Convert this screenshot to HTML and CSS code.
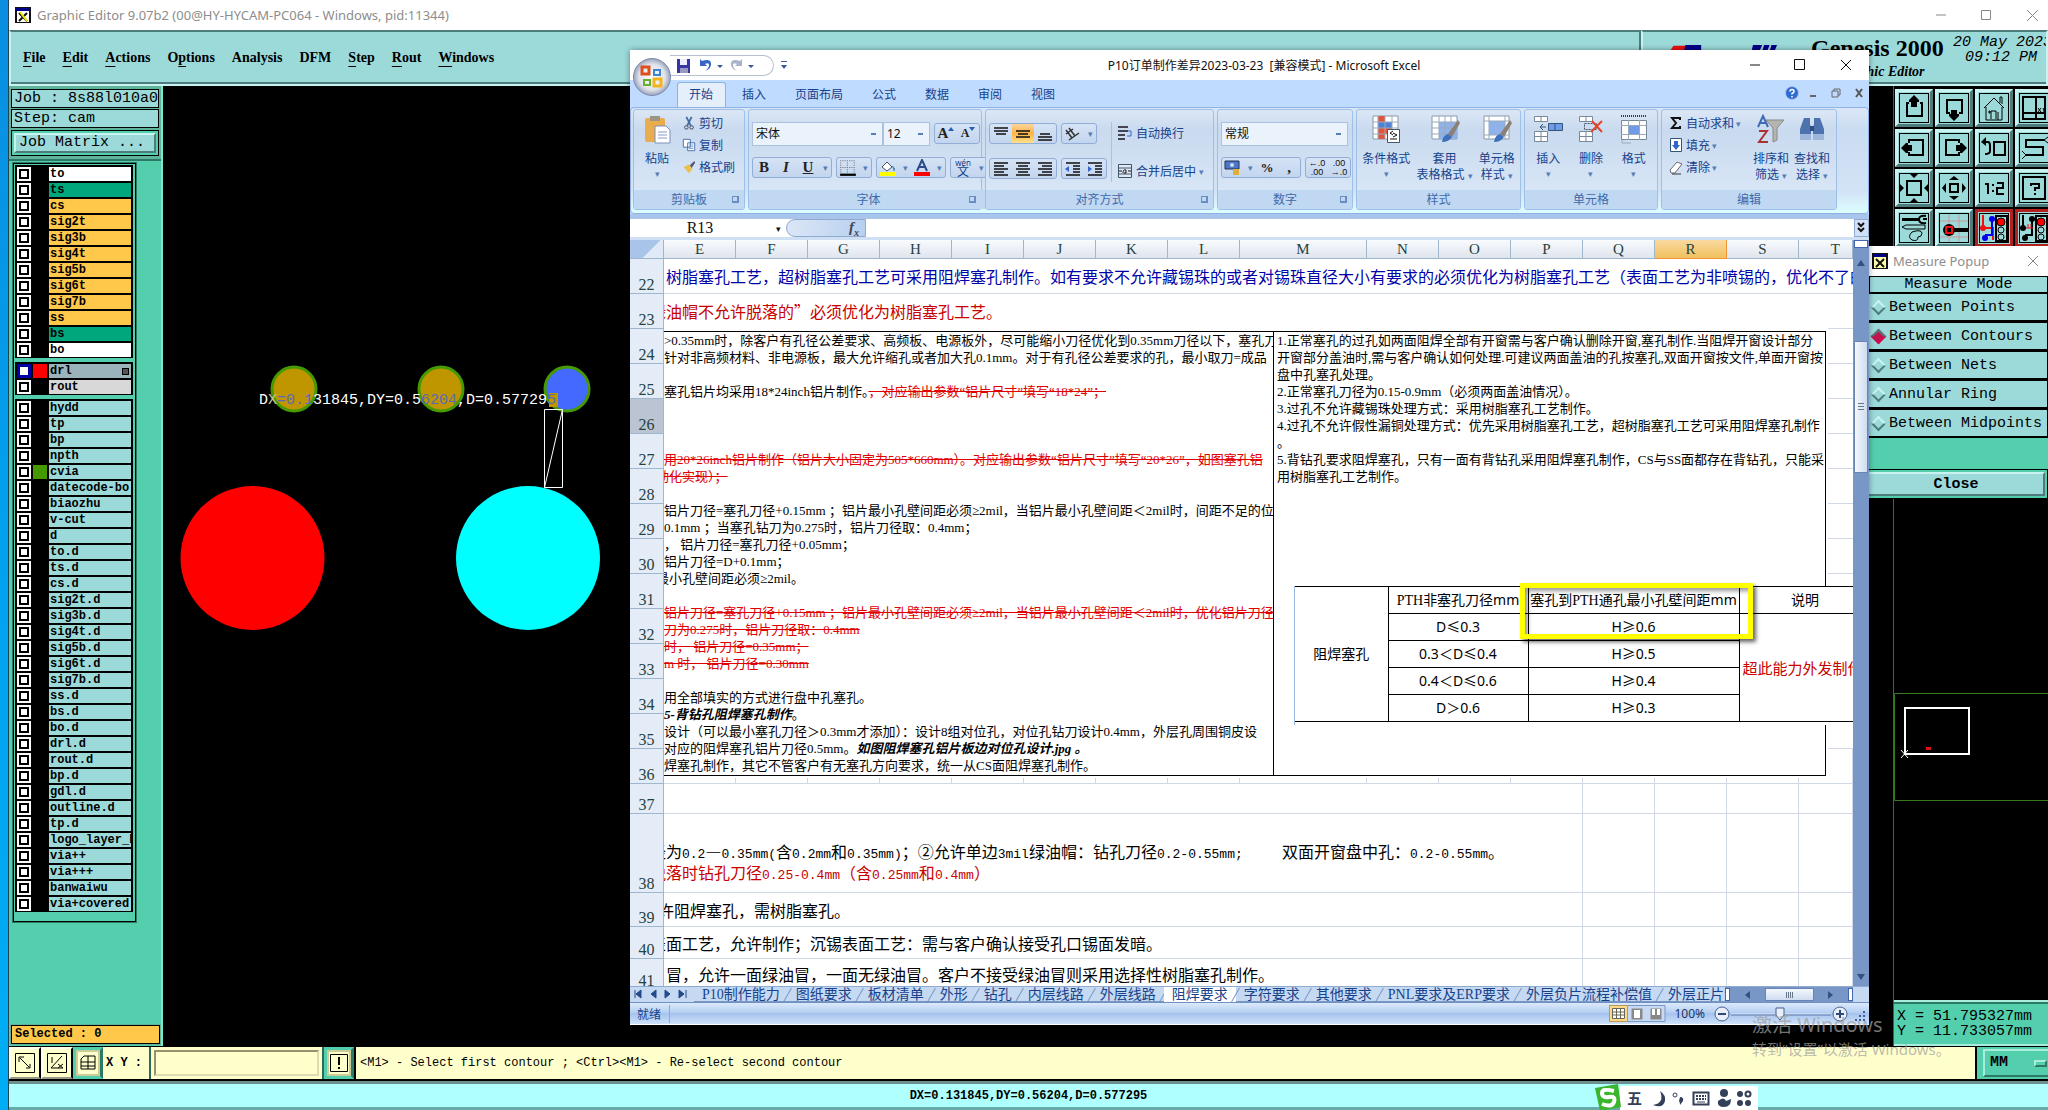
FILE: index.html
```html
<!DOCTYPE html>
<html lang="zh-CN">
<head>
<meta charset="utf-8">
<title>Graphic Editor</title>
<link rel="stylesheet" href="styles.css">
</head>
<body>
<div class="desktop">
<div class="wallpaper"></div>
<div class="editor">
  <header class="caption">
    <svg class="xicon" viewBox="0 0 16 16"><rect x="0" y="0" width="16" height="16" fill="#111"/><rect x="1" y="1" width="13" height="3" fill="#008"/><rect x="2" y="4" width="12" height="11" fill="#fff"/><path d="M4 6l8 8M12 6l-8 8" stroke="#111" stroke-width="2"/><path d="M5 5l7 9" stroke="#ee0" stroke-width="2"/></svg>
    <h1>Graphic Editor 9.07b2 (00@HY-HYCAM-PC064 - Windows, pid:11344)</h1>
    <svg class="winctl" viewBox="0 0 120 16"><path d="M8 8h10M53.500 3.500h9v9h-9zM99 3l11 11M110 3l-11 11" fill="none" stroke="#888"/></svg>
  </header>
  <div class="topbar">
    <nav class="menu">
      <a href="#"><u>F</u>ile</a><a href="#"><u>E</u>dit</a><a href="#"><u>A</u>ctions</a><a href="#">O<u>p</u>tions</a><a href="#">Analysis</a><a href="#">DFM</a><a href="#"><u>S</u>tep</a><a href="#"><u>R</u>out</a><a href="#"><u>W</u>indows</a>
    </nav>
    <div class="brand">
      <svg viewBox="0 0 130 40" class="brand-mark"><path d="M6 2h14l-2 9H0zM0 8h9l-3 8H0z" fill="#e11"/><path d="M19 1h17v8H17zM92 1l10 0-4 9h-8zM104 1h6l-4 10h-5zM112 1h6l-4 10h-5z" fill="#008"/></svg>
      <div class="brand-name"><b>Genesis 2000</b><i>Graphic Editor</i></div>
      <div class="clock"><span>20 May 2023</span><span>09:12 PM</span></div>
    </div>
  </div>
  <main class="work">
    <aside class="left">
      <div class="job">
        <div class="field">Job : 8s88l010a0</div>
        <div class="field">Step: cam</div>
        <div class="matrix"><button>Job Matrix ...</button></div>
      </div>
      <div class="layers">
        <div class="group">
          <label class="white"><input type="checkbox"><i></i><span>to</span></label>
          <label class="green"><input type="checkbox"><i></i><span>ts</span></label>
          <label class="gold"><input type="checkbox"><i></i><span>cs</span></label>
          <label class="gold"><input type="checkbox"><i></i><span>sig2t</span></label>
          <label class="gold"><input type="checkbox"><i></i><span>sig3b</span></label>
          <label class="gold"><input type="checkbox"><i></i><span>sig4t</span></label>
          <label class="gold"><input type="checkbox"><i></i><span>sig5b</span></label>
          <label class="gold"><input type="checkbox"><i></i><span>sig6t</span></label>
          <label class="gold"><input type="checkbox"><i></i><span>sig7b</span></label>
          <label class="gold"><input type="checkbox"><i></i><span>ss</span></label>
          <label class="green"><input type="checkbox"><i></i><span>bs</span></label>
          <label class="white"><input type="checkbox"><i></i><span>bo</span></label>
        </div>
        <div class="group">
          <label class="steel"><input type="checkbox" checked><i class="red"></i><span>drl</span></label>
          <label class="grey"><input type="checkbox"><i></i><span>rout</span></label>
        </div>
        <div class="group">
          <label><input type="checkbox"><i></i><span>hydd</span></label>
          <label><input type="checkbox"><i></i><span>tp</span></label>
          <label><input type="checkbox"><i></i><span>bp</span></label>
          <label><input type="checkbox"><i></i><span>npth</span></label>
          <label><input type="checkbox"><i class="moss"></i><span>cvia</span></label>
          <label><input type="checkbox"><i></i><span>datecode-bo</span></label>
          <label><input type="checkbox"><i></i><span>biaozhu</span></label>
          <label><input type="checkbox"><i></i><span>v-cut</span></label>
          <label><input type="checkbox"><i></i><span>d</span></label>
          <label><input type="checkbox"><i></i><span>to.d</span></label>
          <label><input type="checkbox"><i></i><span>ts.d</span></label>
          <label><input type="checkbox"><i></i><span>cs.d</span></label>
          <label><input type="checkbox"><i></i><span>sig2t.d</span></label>
          <label><input type="checkbox"><i></i><span>sig3b.d</span></label>
          <label><input type="checkbox"><i></i><span>sig4t.d</span></label>
          <label><input type="checkbox"><i></i><span>sig5b.d</span></label>
          <label><input type="checkbox"><i></i><span>sig6t.d</span></label>
          <label><input type="checkbox"><i></i><span>sig7b.d</span></label>
          <label><input type="checkbox"><i></i><span>ss.d</span></label>
          <label><input type="checkbox"><i></i><span>bs.d</span></label>
          <label><input type="checkbox"><i></i><span>bo.d</span></label>
          <label><input type="checkbox"><i></i><span>drl.d</span></label>
          <label><input type="checkbox"><i></i><span>rout.d</span></label>
          <label><input type="checkbox"><i></i><span>bp.d</span></label>
          <label><input type="checkbox"><i></i><span>gdl.d</span></label>
          <label><input type="checkbox"><i></i><span>outline.d</span></label>
          <label><input type="checkbox"><i></i><span>tp.d</span></label>
          <label><input type="checkbox"><i></i><span>logo_layer_b</span></label>
          <label><input type="checkbox"><i></i><span>via++</span></label>
          <label><input type="checkbox"><i></i><span>via+++</span></label>
          <label><input type="checkbox"><i></i><span>banwaiwu</span></label>
          <label><input type="checkbox"><i></i><span>via+covered</span></label>
        </div>
      </div>
      <div class="selected">Selected : 0</div>
    </aside>
    <svg class="canvas">
      <g stroke="#459a00" stroke-width="3"><circle cx="131" cy="303" r="22" fill="#bf9600"/><circle cx="278" cy="303" r="22" fill="#bf9600"/><circle cx="404" cy="303" r="22" fill="#4369ff"/></g>
      <circle cx="89.500" cy="472" r="72" fill="#f00"/><circle cx="365" cy="472" r="72" fill="#0ff"/>
      <path d="M381.500 323.500h18v78h-18zM381.500 401.500l18-78" fill="none" stroke="#fff"/>
      <rect x="386" y="307" width="9" height="14" fill="#bf9600"/>
      <text x="96" y="318" fill="#fff">D<tspan fill="#c4c4a0">X</tspan><tspan fill="#5a6ab8">=0.1</tspan>31845,DY=0.5<tspan fill="#5a6ab8">6204</tspan>,D=0.57729<tspan fill="#5a6ab8">5</tspan></text>
    </svg>
    <aside class="right">
      <div class="tools">
        <button aria-label="Pan up"><svg viewBox="0 0 30 30"><path d="M10 10H8v13h15V10h-2" fill="none" stroke="#000" stroke-width="2"/><path d="M15 2l5 5v2h-2v5h-6V9h-2V7z"/></svg></button>
        <button aria-label="Pan down"><svg viewBox="0 0 30 30"><path d="M11 20H8V7h15v13h-3" fill="none" stroke="#000" stroke-width="2"/><path d="M12 17h6v4h2v2l-5 5-5-5v-2h2z"/></svg></button>
        <button aria-label="Home"><svg viewBox="0 0 30 30"><path d="M5 15L15 5l10 10M7 14v13h16V14M21 10V4h2v7M12 26v-8h5v8M19 19v8M10 18h1v2h-1z" fill="none" stroke="#000"/></svg></button>
        <button aria-label="Zoom XY"><svg viewBox="0 0 30 30"><path d="M4 4h22v22H4zM17 4v22M4 20h22" fill="none" stroke="#000" stroke-width="2"/><path d="M19 15l3 4m0-4l-3 4M24 15l1 2v2" stroke="#000"/></svg></button>
        <button aria-label="Pan left"><svg viewBox="0 0 30 30"><path d="M10 10V7h14v15H10v-3" fill="none" stroke="#000" stroke-width="2"/><path d="M2 15l5-5h2v2h4v6H9v2H7z"/></svg></button>
        <button aria-label="Pan right"><svg viewBox="0 0 30 30"><path d="M20 10V7H7v15h13v-3" fill="none" stroke="#000" stroke-width="2"/><path d="M28 15l-5-5h-2v2h-4v6h4v2h2z"/></svg></button>
        <button aria-label="Previous view"><svg viewBox="0 0 30 30"><path d="M15 9h11v13H15zM5 9h4q2 0 2 4v5q0 3-5 3" fill="none" stroke="#000" stroke-width="2"/><path d="M2 9l5-5v9z"/></svg></button>
        <button aria-label="Serpentine"><svg viewBox="0 0 30 30"><path d="M25 7H7v7h17v8H7" fill="none" stroke="#000" stroke-width="2"/><path d="M25 7l4-3m-4 3l4 3M7 22l-4-4m4 4l-4 4" stroke="#000"/></svg></button>
        <button aria-label="Zoom in"><svg viewBox="0 0 30 30"><path d="M8 8h14v14H8z" fill="none" stroke="#000" stroke-width="2"/><path d="M10 0h10l-5 5zM10 30h10l-5-5zM0 10v10l5-5zM30 10v10l-5-5z"/></svg></button>
        <button aria-label="Zoom out"><svg viewBox="0 0 30 30"><path d="M11 11h8v8h-8z" fill="none" stroke="#000" stroke-width="2"/><path d="M10 7h10l-5-4zM10 23h10l-5 4zM7 10v10l-4-5zM23 10v10l4-5z"/></svg></button>
        <button aria-label="Scale 1:2"><svg viewBox="0 0 30 30"><path d="M6 11h3v10M13 12h2M13 18h2M18 10h6v5h-6v6h7" fill="none" stroke="#000" stroke-width="2"/></svg></button>
        <button aria-label="Help"><svg viewBox="0 0 30 30"><path d="M4 4h22v22H4zM12 13v-2h8v4h-4v3M16 20v2" fill="none" stroke="#000" stroke-width="2"/></svg></button>
        <button aria-label="Setup"><svg viewBox="0 0 30 30"><path d="M3 5h17v3H3z"/><path d="M27 3q-7-1-7 3.500t7 3.500M24 6h4" fill="none" stroke="#000" stroke-width="2"/><path d="M3 14l4-2h19v4H7zM13 19q9-3 10 1 0 4-4 4 0 5-6 3-5-3 0-8z" fill="none" stroke="#000"/></svg></button>
        <button aria-label="Probe"><svg viewBox="0 0 30 30"><path d="M10 0v30M20 0v30M0 8h30M0 24h30" stroke="#c99"/><circle cx="10" cy="17" r="6"/><path d="M15 15h14v4H15z"/><path d="M7 14h6v6H7z" fill="none" stroke="#e11" stroke-width="2"/></svg></button>
        <button class="hot" aria-label="Nets"><svg viewBox="0 0 30 30"><path d="M4 2v13h10v12" stroke="#e11" fill="none" stroke-width="2"/><path d="M13 6v16H6" stroke="#00e" fill="none" stroke-width="2"/><circle cx="4" cy="15" r="3" fill="#e11"/><circle cx="13" cy="6" r="3" fill="#00e"/><circle cx="6" cy="25" r="3" fill="#00e"/><rect x="17" y="3" width="11" height="25" fill="#9cdada" stroke="#000" stroke-width="2"/><circle cx="22" cy="9" r="4" fill="#f00" stroke="#000"/><circle cx="22" cy="17" r="3" fill="none" stroke="#000"/><circle cx="22" cy="24" r="3" fill="none" stroke="#000"/></svg></button>
        <button class="hot" aria-label="Check"><svg viewBox="0 0 30 30"><path d="M4 2v13M13 6v16H6" stroke="#000" fill="none" stroke-width="2"/><path d="M7 15h7M9 11v4M12 11v4" stroke="#e11"/><circle cx="4" cy="15" r="3"/><circle cx="13" cy="6" r="3"/><circle cx="6" cy="25" r="3"/><rect x="17" y="3" width="11" height="25" fill="#9cdada" stroke="#000" stroke-width="2"/><circle cx="22" cy="9" r="4" fill="#f00" stroke="#000"/><circle cx="22" cy="17" r="3" fill="none" stroke="#000"/><circle cx="22" cy="24" r="3" fill="none" stroke="#000"/></svg></button>
      </div>
      <div class="overview">
        <svg viewBox="0 0 155 108"><path d="M.5.500H156v107H.5z" fill="none" stroke="#3a7a1e"/><path d="M11 15h64v46H11z" fill="none" stroke="#fff" stroke-width="2"/><path d="M7 57l7 8m0-8l-7 8" stroke="#fff"/><path d="M32 54h5v3h-5z" fill="#d11"/></svg>
      </div>
      <div class="coords"><span>X = 51.795327mm</span><span>Y = 11.733057mm</span></div>
    </aside>
  </main>
  <footer class="command">
    <button class="flat" aria-label="Stretch"><svg viewBox="0 0 20 20"><path d="M.5.500h19v19H.5zM4 9V4h5M5 5l9 9M15 11v4h-4" fill="none" stroke="#000"/></svg></button>
    <button class="flat" aria-label="Angle"><svg viewBox="0 0 20 20"><path d="M.5.500h19v19H.5zM15 3L4 15h12M5 4v6M11 11l5 4m0-4l-5 4" fill="none" stroke="#000"/></svg></button>
    <button class="on" aria-label="Grid"><svg viewBox="0 0 20 20"><path d="M6 3h11v13H3V6zM3 9h14M10 3v13M3 13h14" fill="none" stroke="#000"/></svg></button>
    <label for="xy">X Y :</label>
    <span class="xybox"><input id="xy" type="text"></span>
    <button class="on" aria-label="Apply"><svg viewBox="0 0 20 20"><path d="M1.500 1.500h17v17h-17z" fill="none" stroke="#000"/><path d="M10 4v8M10 14v2" stroke="#000" stroke-width="2"/></svg></button>
    <p>&lt;M1&gt; - Select first contour ; &lt;Ctrl&gt;&lt;M1&gt; - Re-select second contour</p>
    <div class="units"><button>MM<i></i></button></div>
  </footer>
  <div class="status">DX=0.131845,DY=0.56204,D=0.577295</div>
</div>
</div>

<section class="popup">
  <header>
    <svg class="xicon" viewBox="0 0 16 16"><rect width="16" height="16" fill="#111"/><rect x="1" y="1" width="13" height="3" fill="#008"/><rect x="2" y="4" width="12" height="11" fill="#ffa"/><path d="M4 6l8 8M12 6l-8 8" stroke="#111" stroke-width="2"/></svg>
    <h2>Measure Popup</h2>
    <svg class="px" viewBox="0 0 12 12"><path d="M1 1l10 10M11 1L1 11" stroke="#888"/></svg>
  </header>
  <fieldset>
    <legend>Measure Mode</legend>
    <label><input type="radio" name="mode">Between Points</label>
    <label><input type="radio" name="mode" checked>Between Contours</label>
    <label><input type="radio" name="mode">Between Nets</label>
    <label><input type="radio" name="mode">Annular Ring</label>
    <label><input type="radio" name="mode">Between Midpoints</label>
  </fieldset>
  <div class="close"><button>Close</button></div>
</section>

<section class="excel">
  <header class="xl-title">
    <div class="qat">
      <svg viewBox="0 0 110 20"><path d="M7 3h13v14H7z" fill="#3535a5"/><path d="M10 3h7v6h-7z" fill="#eef"/><path d="M10 12h8v5h-8z" fill="#99b"/><path d="M30 3v7h7l-2-2q4-2 4 1t-4 6q7-3 6-8t-9-2z" fill="#3767c4"/><path d="M47 9h6l-3 3zM78 9h6l-3 3z" fill="#3b5a95"/><path d="M72 3v7h-7l2-2q-4-2-4 1t4 6q-7-3-6-8t9-2z" fill="#a9b4c8"/></svg>
    </div>
    <svg class="more" viewBox="0 0 8 10"><path d="M1 5h6l-3 4zM1 1h6v1H1z" fill="#3b5a95"/></svg>
    <h2>P10订单制作差异2023-03-23&nbsp; [兼容模式] - Microsoft Excel</h2>
    <svg class="winctl" viewBox="0 0 120 16"><path d="M10 8h10M54.500 2.500h10v10h-10zM101 3l10 10M111 3l-10 10" fill="none" stroke="#111"/></svg>
  </header>
  <svg class="orb" viewBox="0 0 40 40"><defs><radialGradient id="o"><stop offset="0" stop-color="#fff"/><stop offset=".7" stop-color="#dfe2ea"/><stop offset="1" stop-color="#98a2ba"/></radialGradient></defs><circle cx="20" cy="20" r="18.500" fill="url(#o)" stroke="#7d8db0"/><g fill="none" stroke-width="3"><path d="M10 10h7v7h-7z" stroke="#dd4f1c"/><path d="M22 13h6v5h-6z" stroke="#3a86d4" stroke-width="2"/><path d="M12 23h6v5h-6z" stroke="#6bad2c" stroke-width="2"/><path d="M22 22h7v7h-7z" stroke="#f2b51d"/></g></svg>
  <nav class="xl-tabs">
    <a href="#" class="active">开始</a><a href="#">插入</a><a href="#">页面布局</a><a href="#">公式</a><a href="#">数据</a><a href="#">审阅</a><a href="#">视图</a>
    <svg viewBox="0 0 90 16"><circle cx="8" cy="8" r="6.500" fill="#2f6bd0" stroke="#a9c4ee"/><path d="M6 6.500q0-2 2-2t2 2q0 1-2 2v1M8 11v1.500" stroke="#fff" fill="none" stroke-width="1.500"/><path d="M26 11h6" stroke="#666" stroke-width="2"/><path d="M48 6h6v6h-6zM50 6V4h6v6h-2" fill="none" stroke="#666"/><path d="M72 4l6 8M78 4l-6 8" stroke="#555" stroke-width="2"/></svg>
  </nav>
  <div class="ribbon">
    <div class="rg clip">
      <div class="rg-body">
        <button class="big"><svg viewBox="0 0 30 30"><rect x="3" y="4" width="20" height="24" rx="2" fill="#e9ad4e"/><path d="M8 2h10v5H8z" fill="#9c9485"/><path d="M13 12h11l4 4v13H13z" fill="#fff" stroke="#7a90b8"/><path d="M16 18h9M16 21h9M16 24h9" stroke="#89c"/></svg>粘贴<em>▾</em></button>
        <div class="stack">
          <button><svg viewBox="0 0 16 16"><path d="M5 1l5 10M11 1L6 11" stroke="#44699c" stroke-width="2"/><circle cx="5" cy="13" r="2" fill="none" stroke="#335"/><circle cx="11" cy="13" r="2" fill="none" stroke="#335"/></svg>剪切</button>
          <button><svg viewBox="0 0 16 16"><path d="M1.500 1.500h8v9h-8zM6.500 5.500h8v9h-8z" fill="#fff" stroke="#3b62a8"/><path d="M8 8h5M8 10h5M8 12h5" stroke="#69c"/></svg>复制</button>
          <button><svg viewBox="0 0 16 16"><path d="M2 8l6-3 4 5-4 5z" fill="#e8c04b"/><path d="M9 6l5-5 1 2-4 6z" fill="#557"/></svg>格式刷</button>
        </div>
      </div>
      <h3>剪贴板<s></s></h3>
    </div>
    <div class="rg font">
      <div class="rg-body rows">
        <div class="row"><select class="combo face" aria-label="字体"><option>宋体</option></select><select class="combo size" aria-label="字号"><option>12</option></select><span class="bg"><button class="t" aria-label="增大字号">A<svg class="tri" viewBox="0 0 6 4"><path d="M0 4h6L3 0z" fill="#2a5db0"/></svg></button><button class="t small" aria-label="减小字号">A<svg class="tri" viewBox="0 0 6 4"><path d="M0 0h6L3 4z" fill="#2a5db0"/></svg></button></span></div>
        <div class="row"><span class="bg"><button class="t">B</button><button class="t it">I</button><button class="t un">U</button><em>▾</em></span><span class="bg"><button aria-label="边框"><svg viewBox="0 0 16 16"><path d="M1.500 1v12M7.500 1v12M13.500 1v12M1 1.500h13M1 7.500h13" stroke="#778" stroke-dasharray="1 1"/><path d="M1 14h14" stroke="#000" stroke-width="2"/></svg></button><em>▾</em></span><span class="bg"><button aria-label="填充颜色"><svg viewBox="0 0 18 18"><path d="M3 8l5-5 5 5-5 4z" fill="#fff" stroke="#456"/><path d="M13 7q4 2 2 5" fill="#48a" stroke="#48a"/><path d="M1 13h16v4H1z" fill="#ff0"/></svg></button><em>▾</em><button aria-label="字体颜色"><svg viewBox="0 0 18 18"><path d="M4 12L9 1l5 11M6 8h6" fill="none" stroke="#2a4a8a" stroke-width="2"/><path d="M1 13h16v4H1z" fill="#f00"/></svg></button><em>▾</em></span><span class="bg"><button class="wen"><small>wén</small>文</button><em>▾</em></span></div>
      </div>
      <h3>字体<s></s></h3>
    </div>
    <div class="rg align">
      <div class="rg-body rows">
        <div class="row"><span class="bg"><button aria-label="顶端对齐"><svg viewBox="0 0 18 18"><path d="M2 3h14M2 6h14M4 9h10" stroke="#111" stroke-width="1.500"/></svg></button><button class="lit" aria-label="垂直居中"><svg viewBox="0 0 18 18"><path d="M2 6h14M4 9h10M2 12h14" stroke="#111" stroke-width="1.500"/></svg></button><button aria-label="底端对齐"><svg viewBox="0 0 18 18"><path d="M4 9h10M2 12h14M2 15h14" stroke="#111" stroke-width="1.500"/></svg></button></span><span class="bg"><button aria-label="方向"><svg viewBox="0 0 18 18"><path d="M2 5l6 8M5 3l6 8M2 9l7-5M5 15L15 8" fill="none" stroke="#333" stroke-width="1.500"/></svg></button><em>▾</em></span></div>
        <div class="row"><span class="bg"><button aria-label="左对齐"><svg viewBox="0 0 18 18"><path d="M2 3h14M2 6h10M2 9h14M2 12h10M2 15h14" stroke="#111" stroke-width="1.500"/></svg></button><button aria-label="居中"><svg viewBox="0 0 18 18"><path d="M2 3h14M4 6h10M2 9h14M4 12h10M2 15h14" stroke="#111" stroke-width="1.500"/></svg></button><button aria-label="右对齐"><svg viewBox="0 0 18 18"><path d="M2 3h14M6 6h10M2 9h14M6 12h10M2 15h14" stroke="#111" stroke-width="1.500"/></svg></button></span><span class="bg"><button aria-label="减少缩进"><svg viewBox="0 0 18 18"><path d="M2 3h14M9 6h7M9 9h7M9 12h7M2 15h14" stroke="#111" stroke-width="1.500"/><path d="M1 9l4-3v6z" fill="#36c"/></svg></button><button aria-label="增加缩进"><svg viewBox="0 0 18 18"><path d="M2 3h14M9 6h7M9 9h7M9 12h7M2 15h14" stroke="#111" stroke-width="1.500"/><path d="M6 9L2 6v6z" fill="#36c"/></svg></button></span></div>
      </div>
      <div class="wrap">
        <button><svg viewBox="0 0 16 16"><path d="M1 2h10M1 6h10M1 10h7M1 14h7" stroke="#445" stroke-width="2"/><path d="M11 6h3v5h-4" stroke="#36c" fill="none"/></svg>自动换行</button>
        <button><svg viewBox="0 0 16 16"><path d="M1.500 1.500h13v13h-13zM1 5h14M1 11h14" fill="#dfe9f7" stroke="#456"/><path d="M2 8h3M11 8h3M6 10q0-4 3-3v3H7" fill="none" stroke="#111"/></svg>合并后居中 <em>▾</em></button>
      </div>
      <h3>对齐方式<s></s></h3>
    </div>
    <div class="rg num">
      <div class="rg-body rows">
        <div class="row"><select class="combo fmt" aria-label="数字格式"><option>常规</option></select></div>
        <div class="row"><span class="bg"><button aria-label="会计格式"><svg viewBox="0 0 18 18"><path d="M1 2h14v8H1z" fill="#4b76c9" stroke="#235"/><circle cx="8" cy="6" r="2" fill="#cde"/><path d="M9 10h6v6H9z" fill="#dcae3a"/></svg></button><em>▾</em><button class="t pc">%</button><button class="t">,</button></span><span class="bg"><button class="dec">←.0<br>.00</button><button class="dec">.00<br>→.0</button></span></div>
      </div>
      <h3>数字<s></s></h3>
    </div>
    <div class="rg sty">
      <div class="rg-body">
        <button class="big"><svg viewBox="0 0 30 30"><path d="M2 2h25v23H2z" fill="#fff" stroke="#89a"/><path d="M7 2h7v6H7zM7 14h14v6H7zM7 20h7v5H7z" fill="#e5533a"/><path d="M7 8h14v6H7z" fill="#4f81d8"/><path d="M2 8h25M2 14h25M2 20h25M7 2v23M14 2v23M21 2v23" stroke="#9ab"/><path d="M16.500 15.500h12v13h-12z" fill="#fff" stroke="#456"/><path d="M22 17l-3 2 3 2M22 23l4-2-4-2M19 25h7" fill="none" stroke="#111"/></svg>条件格式<em>▾</em></button>
        <button class="big"><svg viewBox="0 0 30 30"><path d="M2 2h25v23H2z" fill="#fff" stroke="#89a"/><path d="M9 8h18v17H9z" fill="#8fb2ea"/><path d="M2 8h25M2 14h25M2 20h25M9 2v23M15 2v23M21 2v23" stroke="#9ab"/><path d="M28 6L18 20l4 3 8-14z" fill="#8a8078"/><path d="M18 20q-5 1-6 8 7 0 10-5z" fill="#3f70bd"/></svg>套用<span>表格格式 <em>▾</em></span></button>
        <button class="big"><svg viewBox="0 0 30 30"><path d="M2 2h25v23H2z" fill="#fff" stroke="#89a"/><path d="M7 7h16v14H7z" fill="#8fb2ea"/><path d="M7 2v23M23 2v23M2 7h25M2 21h25" stroke="#9ab"/><path d="M28 6L18 20l4 3 8-14z" fill="#8a8078"/><path d="M18 20q-5 1-6 8 7 0 10-5z" fill="#3f70bd"/></svg>单元格<span>样式 <em>▾</em></span></button>
      </div>
      <h3>样式</h3>
    </div>
    <div class="rg cel">
      <div class="rg-body">
        <button class="big"><svg viewBox="0 0 30 30"><path d="M1.500 2.500h13v5h-13zM1.500 17.500h13v10h-13zM1 22.500h13M8 2v6M8 17v10" fill="#fff" stroke="#789"/><path d="M15.500 9.500h14v7h-14z" fill="#6f9be8" stroke="#357"/><path d="M22 9v7M13 13H7m3-3l-3 3 3 3" fill="none" stroke="#357"/></svg>插入<em>▾</em></button>
        <button class="big"><svg viewBox="0 0 30 30"><path d="M3.500 2.500h13v5h-13zM3.500 17.500h13v10h-13zM3 22.500h13M10 2v6M10 17v10" fill="#fff" stroke="#789"/><path d="M8.500 9.500h12v6h-12z" fill="none" stroke="#456" stroke-dasharray="2 1"/><path d="M16 7l10 11M26 7L15 18" stroke="#e5432a" stroke-width="2"/></svg>删除<em>▾</em></button>
        <button class="big"><svg viewBox="0 0 30 30"><path d="M2 2h25" stroke="#246" stroke-dasharray="1 1" stroke-width="2"/><path d="M2.500 6.500h25v19h-25z" fill="#fff" stroke="#789"/><path d="M10 11h10v10H10z" fill="#6f9be8"/><path d="M9.500 6v20M20.500 6v20M2 11.500h25M2 20.500h25M3 26v3h9" fill="none" stroke="#9ab"/></svg>格式<em>▾</em></button>
      </div>
      <h3>单元格</h3>
    </div>
    <div class="rg edt">
      <div class="rg-body">
        <div class="stack">
          <button><svg viewBox="0 0 16 16"><path d="M12 5V3H4l4 5-4 5h8v-2" fill="none" stroke="#111" stroke-width="2"/></svg>自动求和 <em>▾</em></button>
          <button><svg viewBox="0 0 16 16"><path d="M2.500 1.500h11v13h-11z" fill="#fff" stroke="#357"/><path d="M6 4h4v4h2l-4 5-4-5h2z" fill="#2f66cf"/></svg>填充 <em>▾</em></button>
          <button><svg viewBox="0 0 16 16"><path d="M2 11l7-8 5 2-7 9H3z" fill="#fff" stroke="#667"/><path d="M4 15h9" stroke="#333"/></svg>清除 <em>▾</em></button>
        </div>
        <button class="big"><svg viewBox="0 0 30 30"><path d="M2 13L7 2l5 11M4 9h6" fill="none" stroke="#3e6bb5" stroke-width="2"/><path d="M3 17h8L3 28h9" fill="none" stroke="#a33" stroke-width="2"/><path d="M10 6h18l-7 8v12l-4 2V14z" fill="#b5b5b0" stroke="#888"/></svg>排序和<span>筛选 <em>▾</em></span></button>
        <button class="big"><svg viewBox="0 0 30 30"><path d="M7 4h6v6l1 4v12H3V15zM17 4h6l4 11v11H16V14l1-4z" fill="#4d72ad"/><path d="M3 20h11v6H3zM16 20h11v6H16z" fill="#9db6dc"/><path d="M13 12h4v5h-4z" fill="#2d4d85"/></svg>查找和<span>选择 <em>▾</em></span></button>
      </div>
      <h3>编辑</h3>
    </div>
  </div>
  <div class="fbar">
    <input class="name" aria-label="名称框" value="R13"><em>▾</em><span class="fx"><i>f<sub>x</sub></i></span><input class="formula" aria-label="编辑栏"><button aria-label="展开编辑栏"><svg viewBox="0 0 13 16"><path d="M3 3l3 3 3-3M3 8l3 3 3-3" fill="none" stroke="#111" stroke-width="2"/></svg></button>
  </div>
  <div class="view">
    <div class="sheet">
      <table class="grid">
        <colgroup><col class="h"><col span="8" class="c"><col class="m"><col span="6" class="c"><col></colgroup>
        <thead><tr><th class="corner"></th><th>E</th><th>F</th><th>G</th><th>H</th><th>I</th><th>J</th><th>K</th><th>L</th><th>M</th><th>N</th><th>O</th><th>P</th><th>Q</th><th class="cur">R</th><th>S</th><th class="last">T</th></tr></thead>
        <tbody>
        <tr><th>22</th><td colspan="16" class="blue">树脂塞孔工艺，超树脂塞孔工艺可采用阻焊塞孔制作。如有要求不允许藏锡珠的或者对锡珠直径大小有要求的必须优化为树脂塞孔工艺（表面工艺为非喷锡的，优化不了的</td></tr>
        <tr><th>23</th><td colspan="16" class="redtx"><div class="cut">绿油帽不允许脱落的<span class="q">”</span>必须优化为树脂塞孔工艺。</div></td></tr>
        <tr><th>24</th><td colspan="16"></td></tr>
        <tr><th>25</th><td colspan="16"></td></tr>
        <tr><th class="cur">26</th><td colspan="16"></td></tr>
        <tr><th>27</th><td colspan="16"></td></tr>
        <tr><th>28</th><td colspan="16"></td></tr>
        <tr><th>29</th><td colspan="16"></td></tr>
        <tr><th>30</th><td colspan="16"></td></tr>
        <tr><th>31</th><td colspan="16"></td></tr>
        <tr><th>32</th><td colspan="16"></td></tr>
        <tr><th>33</th><td colspan="16"></td></tr>
        <tr><th>34</th><td colspan="16"></td></tr>
        <tr><th>35</th><td colspan="16"></td></tr>
        <tr class="v"><th>36</th><td></td><td></td><td></td><td></td><td></td><td></td><td></td><td></td><td></td><td></td><td></td><td></td><td></td><td></td><td></td><td></td></tr>
        <tr class="v r37"><th>37</th><td colspan="12"></td><td></td><td></td><td></td><td></td></tr>
        <tr class="v r38"><th>38</th><td colspan="12"><div class="pair"><div class="cut">径为<kbd>0.2</kbd>—<kbd>0.35mm(</kbd>含<kbd>0.2mm</kbd>和<kbd>0.35mm)</kbd>；②允许单边<kbd>3mil</kbd>绿油帽：钻孔刀径<kbd>0.2-0.55mm;</kbd><br><span class="redtx">脱落时钻孔刀径<kbd>0.25-0.4mm</kbd>（含<kbd>0.25mm</kbd>和<kbd>0.4mm</kbd>）</span></div><div>双面开窗盘中孔：<kbd>0.2-0.55mm</kbd>。</div></div></td><td></td><td></td><td></td><td></td></tr>
        <tr class="v r39"><th>39</th><td colspan="12"><div class="half">许阻焊塞孔，需树脂塞孔。</div></td><td></td><td></td><td></td><td></td></tr>
        <tr class="v r40"><th>40</th><td colspan="12"><div class="cut">表面工艺，允许制作；沉锡表面工艺：需与客户确认接受孔口锡面发暗。</div></td><td></td><td></td><td></td><td></td></tr>
        <tr class="v r41"><th>41</th><td colspan="12">冒，允许一面绿油冒，一面无绿油冒。客户不接受绿油冒则采用选择性树脂塞孔制作。</td><td></td><td></td><td></td><td></td></tr>
        </tbody>
      </table>
      <div class="doc">
        <div class="doc-frame">
          <div class="dl">
            <p>&gt;0.35mm时，除客户有孔径公差要求、高频板、电源板外，尽可能缩小刀径优化到0.35mm刀径以下，塞孔刀</p>
            <p>针对非高频材料、非电源板，最大允许缩孔或者加大孔0.1mm。对于有孔径公差要求的孔，最小取刀=成品</p>
            <p></p>
            <p>塞孔铝片均采用18*24inch铝片制作。<del>，对应输出参数“铝片尺寸”填写“18*24”；</del></p>
            <p></p><p></p><p></p>
            <p><del>用20*26inch铝片制作（铝片大小固定为505*660mm）。对应输出参数“铝片尺寸”填写“20*26”，如图塞孔铝</del></p>
            <p class="in"><del>动化实现）；</del></p>
            <p></p>
            <p>铝片刀径=塞孔刀径+0.15mm ；铝片最小孔壁间距必须≥2mil，当铝片最小孔壁间距＜2mil时，间距不足的位</p>
            <p>0.1mm ；当塞孔钻刀为0.275时，铝片刀径取：0.4mm；</p>
            <p>， 铝片刀径=塞孔刀径+0.05mm；</p>
            <p>铝片刀径=D+0.1mm；</p>
            <p class="in">最小孔壁间距必须≥2mil。</p>
            <p></p>
            <p><del>铝片刀径=塞孔刀径+0.15mm ；铝片最小孔壁间距必须≥2mil，当铝片最小孔壁间距＜2mil时，优化铝片刀径</del></p>
            <p><del>刀为0.275时，铝片刀径取：0.4mm</del></p>
            <p><del>时， 铝片刀径=0.35mm；</del></p>
            <p><del>m 时， 铝片刀径=0.30mm</del></p>
            <p></p>
            <p>用全部填实的方式进行盘中孔塞孔。</p>
            <p><b>5-背钻孔阻焊塞孔制作</b>。</p>
            <p>设计（可以最小塞孔刀径＞0.3mm才添加）：设计8组对位孔，对位孔钻刀设计0.4mm，外层孔周围铜皮设</p>
            <p>对应的阻焊塞孔铝片刀径0.5mm。<b>如图阻焊塞孔铝片板边对位孔设计.jpg 。</b></p>
            <p>焊塞孔制作，其它不管客户有无塞孔方向要求，统一从CS面阻焊塞孔制作。</p>
          </div>
          <div class="dr">
            <p>1.正常塞孔的过孔如两面阻焊全部有开窗需与客户确认删除开窗,塞孔制作.当阻焊开窗设计部分</p>
            <p>开窗部分盖油时,需与客户确认如何处理.可建议两面盖油的孔按塞孔,双面开窗按文件,单面开窗按</p>
            <p>盘中孔塞孔处理。</p>
            <p>2.正常塞孔刀径为0.15-0.9mm（必须两面盖油情况）。</p>
            <p>3.过孔不允许藏锡珠处理方式：采用树脂塞孔工艺制作。</p>
            <p>4.过孔不允许假性漏铜处理方式：优先采用树脂塞孔工艺，超树脂塞孔工艺可采用阻焊塞孔制作</p>
            <p>。</p>
            <p>5.背钻孔要求阻焊塞孔，只有一面有背钻孔采用阻焊塞孔制作，CS与SS面都存在背钻孔，只能采</p>
            <p>用树脂塞孔工艺制作。</p>
          </div>
        </div>
      </div>
      <div class="spec">
        <table>
          <colgroup><col class="s1"><col class="s2"><col class="s3"><col class="s4"></colgroup>
          <tr><td rowspan="5">阻焊塞孔</td><td><span class="pth">PTH</span>非塞孔刀径mm</td><td>塞孔到<span class="pth">PTH</span>通孔最小孔壁间距mm</td><td>说明</td></tr>
          <tr><td>D≤0.3</td><td>H≥0.6</td><td rowspan="4" class="over">超此能力外发制作</td></tr>
          <tr><td>0.3＜D≤0.4</td><td>H≥0.5</td></tr>
          <tr><td>0.4＜D≤0.6</td><td>H≥0.4</td></tr>
          <tr><td>D＞0.6</td><td>H≥0.3</td></tr>
        </table>
        <div class="mark"></div>
      </div>
    </div>
    <div class="vscroll"><i class="split"></i><svg viewBox="0 0 10 10"><path d="M1 8h8L5 2z"/></svg><b></b><svg class="dn" viewBox="0 0 10 10"><path d="M1 2h8L5 8z"/></svg></div>
  </div>
  <div class="stabs">
    <svg class="nav" viewBox="0 0 64 14"><path d="M5 3v8M11 3v8L6 7zM26 3v8l-5-4zM35 3v8l5-4zM49 3v8l5-4zM56 3v8" fill="#234a8c" stroke="#234a8c"/></svg>
    <div class="slist"><a href="#">P10制作能力</a><a href="#">图纸要求</a><a href="#">板材清单</a><a href="#">外形</a><a href="#">钻孔</a><a href="#">内层线路</a><a href="#">外层线路</a><a href="#" class="active">阻焊要求</a><a href="#">字符要求</a><a href="#">其他要求</a><a href="#">PNL要求及ERP要求</a><a href="#">外层负片流程补偿值</a><a href="#">外层正片流程</a></div>
    <div class="hscroll"><i></i><svg viewBox="0 0 10 10"><path d="M8 1v8L3 5z"/></svg><b></b><svg viewBox="0 0 10 10"><path d="M2 1v8l5-4z"/></svg><i></i></div>
  </div>
  <footer class="xl-status">
    <span class="ready">就绪</span>
    <svg class="views" viewBox="0 0 57 17"><rect x=".5" y=".5" width="18" height="16" fill="#fcd98a" stroke="#c09a4c"/><path d="M19 .5h37v16H19" fill="#c8daf3" stroke="#7b97c4"/><path d="M3.500 3.500h12v10h-12zM3 7h12M3 10h12M7.500 3v10M11.500 3v10" fill="#fff" stroke="#665"/><path d="M22.500 3.500h11v11h-11z" fill="#888"/><path d="M25 5h6v8h-6z" fill="#fff"/><path d="M41.500 3.500h11v11h-11z" fill="#888"/><path d="M43 4h3v6h-3zM48 4h3v6h-3z" fill="#fff"/></svg>
    <span class="pct">100%</span>
    <svg class="zoombar" viewBox="0 0 156 20"><path d="M18 10h100" stroke="#e5eefb"/><path d="M18 11h100" stroke="#5a78ad"/><g fill="#e9eff8" stroke="#44618f"><circle cx="9" cy="10" r="7"/><circle cx="127" cy="10" r="7"/><path d="M63 4h8v7l-4 5-4-5z"/></g><path d="M5 10h8M123 10h8M127 6v8" stroke="#2d4a7a" stroke-width="2"/><path d="M150 8h2M146 12h2M150 12h2M142 16h2M146 16h2M150 16h2" stroke="#3d5f9c" stroke-width="2"/></svg>
  </footer>
</section>

<div class="activate"><b>激活 Windows</b><span>转到“设置”以激活 Windows。</span></div>
<div class="ime">
  <svg viewBox="0 0 164 28"><path d="M26 3h138v25H26z" fill="#fff"/><path d="M1 5l23-4 3 23-21 4z" fill="#3ab52c"/><path d="M20 8q-12-3-12 2t7 4 5 5-12 2" fill="none" stroke="#fff" stroke-width="4"/><g fill="#334058"><path d="M66 8q5 12-7 14 10 4 12-4 1-6-5-10zM86 14q4 0 3 4l-3 4q0-3-1-4z"/><circle cx="81" cy="12" r="2" fill="none" stroke="#334058"/><circle cx="130" cy="10" r="4"/><path d="M124 18q6-5 8 0l5-2q0 8-7 8t-6-6z"/><circle cx="146" cy="11" r="3"/><circle cx="154" cy="11" r="2.500" fill="none" stroke="#334058" stroke-width="2"/><circle cx="146" cy="20" r="3"/><circle cx="154" cy="20" r="3"/></g><path d="M99.500 9.500h15v12h-15z" fill="none" stroke="#334058" stroke-width="2"/><path d="M102 13h10M102 16h10" stroke="#334058" stroke-dasharray="2 1" stroke-width="2"/><path d="M103 19h8" stroke="#334058"/></svg>
  <span>五</span>
</div>
</body>
</html>
```
FILE: styles.css
```css
:root{
  --mint:#53cfae; --aqua:#9cdada; --cream:#ffffcb; --gold:#ffc84b; --navy:#15428b;
  --mono:"Liberation Mono",monospace;
  --ui:"Noto Sans","Noto Sans CJK SC",sans-serif;
  --song:"Liberation Serif","Noto Sans CJK SC",serif;
}
*{box-sizing:border-box}
body{margin:0;height:100vh;overflow:hidden;position:relative;background:#000;font-family:var(--ui);color:#000}
h1,h2,h3,p,fieldset,legend{margin:0;padding:0;border:0;font-weight:400}
a{color:inherit;text-decoration:none}
button,input,select{font:inherit;color:inherit;margin:0;padding:0;border:0;background:none;border-radius:0}
em{font-style:normal}
svg{display:block}
.desktop{display:grid;grid-template-columns:9px 1fr;height:100vh}
.wallpaper{background:linear-gradient(#0a8ee0,#00a2ee 50%,#00aef5);border-right:1px solid #245}
.editor{display:grid;grid-template-rows:30px 56px 1fr 35px 29px;min-width:0;min-height:0}

/* window caption */
.caption{display:flex;align-items:center;background:#fff;color:#8d8d8d;padding:0 0 0 6px;gap:6px}
.caption h1{font-size:13px;flex:1;line-height:20px}
.xicon{width:16px;height:16px}
.winctl{width:120px;height:16px}
.topbar{display:grid;grid-template-columns:1fr 407px;min-width:0}
.menu,.brand{background:var(--aqua);border:2px solid #c8f3f0;border-top-color:#4e7c7c;border-bottom-color:#c8f3f0;box-shadow:inset 0 -2px #4e7c7c}
.menu{display:flex;align-items:center;gap:17px;padding-left:12px;font:bold 14px "Liberation Serif",serif;border-right:2px solid #4e7c7c}
.menu u{text-underline-offset:4px}
.brand{display:flex;overflow:hidden;white-space:nowrap}
.brand-mark{width:160px;height:49px;flex:none;padding:12px 0 0 10px}
.brand-name{flex:none;width:150px;display:flex;flex-direction:column;padding:4px 0 0 8px;font-family:"Liberation Serif",serif}
.brand-name b{font-size:24px;line-height:24px}
.brand-name i{font-size:14px;font-weight:bold;line-height:20px;padding:2px 0 0 26px}
.clock{display:flex;flex-direction:column;flex:none;width:99px;font:italic 15px/15px var(--mono);padding:3px 0 0}
.clock span+span{padding-left:12px}

.work{display:grid;grid-template-columns:154px 1fr 155px;min-height:0;background:#000}
.left{background:var(--mint);display:flex;flex-direction:column;border-right:2px solid #7fe5cb;font-family:var(--mono)}
.job{background:#5fb39b;border-bottom:2px solid #2c7a66;padding:3px 2px 3px;display:grid;grid-template-rows:19px 19px 27px;row-gap:1px;font-size:15px}
.field{border:1px solid #000;background:var(--aqua);padding-left:2px;line-height:17px;white-space:nowrap}
.matrix{border:1px solid #000;background:var(--mint);padding:2px;margin-top:1px}
.matrix button{display:block;width:100%;height:20px;text-align:left;padding-left:3px;background:var(--aqua);border:2px solid #c8f3f0;border-right-color:#4e7c7c;border-bottom-color:#4e7c7c;line-height:16px}
.layers{width:123px;margin:2px 0 0 4px;border:1px solid #000;outline:1px solid #2c7a66;padding:1px 2px 9px 1px;display:flex;flex-direction:column;gap:4px;font:bold 12px/14px var(--mono)}
.group{background:#000;padding:1px 1px 0}
.group label{display:grid;grid-template-columns:14px 14px 1fr;column-gap:2px;height:16px;padding:1px}
.group label span{background:var(--aqua);padding-left:1px;overflow:hidden;white-space:nowrap}
.group input{appearance:none;width:14px;height:14px;background:#fff;border:2px solid #fff;outline:0;display:block;box-shadow:inset 0 0 0 2px #000}
.group input:checked{border-color:#00a;box-shadow:inset 0 0 0 1px #009}
.group .white span{background:#fff}
.group .green span{background:#00a67c}
.group .gold span{background:var(--gold)}
.group .grey span{background:#d8d8d8}
.group .steel span{background:#9bb4bc;display:flex;justify-content:space-between;align-items:center;padding-right:2px}
.group .steel span::after{content:"";width:5px;height:5px;border:1px solid #000;background:#555}
.group .red{background:#f00}
.group .moss{background:#459a00}
.selected{margin:auto 1px 2px 2px;border:1px solid #000;outline:1px solid #5fb39b;background:var(--gold);font:bold 12px/16px var(--mono);padding-left:3px;height:19px}
.canvas{width:100%;height:100%;min-width:0;font:15px var(--mono)}

.right{display:flex;flex-direction:column;min-height:0;overflow:hidden;border-left:1px solid #2c6a5c}
.tools{display:grid;grid-template-columns:repeat(4,38px);grid-auto-rows:38px;gap:2px;padding:3px 0 0 1px;background:#000}
.tools button{background:var(--aqua);border:3px solid #c8f3f0;border-right-color:#4e7c7c;border-bottom-color:#4e7c7c;padding:0}
.tools button svg{width:30px;height:30px;margin:1px;outline:1px solid #000;outline-offset:-1px}
.tools .hot{border-color:#b32020}
.overview{flex:1;display:flex;flex-direction:column}
.overview::before{content:"";flex:446}
.overview::after{content:"";flex:199}
.overview svg{width:155px;height:108px;flex:none}
.coords{height:46px;background:var(--mint);border-top:2px solid #a8ecdc;border-bottom:2px solid #a8ecdc;box-shadow:inset 0 2px #2c7a66;display:flex;flex-direction:column;padding:7px 0 0 3px;font:15px/15px var(--mono)}

.command{display:flex;background:var(--cream);border-top:1px solid #000;border-bottom:2px solid #000;font:bold 12px/32px var(--mono);white-space:pre}
.command button svg{width:20px;height:20px;margin:auto}
.command .flat{width:32px;border:2px solid #fffff0;border-right:2px solid #000;border-bottom-color:#998}
.command .on{width:30px;background:var(--cream);border:3px solid var(--mint);box-shadow:inset 0 0 0 2px #cc9;border-right:3px solid #2c7a66}
.command label{width:48px;padding-left:3px;border-right:2px solid #2c6a5c}
.xybox{width:173px;padding:3px;border-right:2px solid #2c6a5c}
.xybox input{display:block;width:100%;height:26px;border:2px solid #99906e;border-right-color:#dddcb0;border-bottom-color:#dddcb0}
.command p{flex:1;padding-left:4px;border-left:2px solid #000}
.units{width:73px;background:var(--mint);border-left:2px solid #000;padding:2px 0 2px 6px;overflow:hidden}
.units button{display:flex;align-items:center;height:28px;width:82px;padding-left:5px;border:2px solid #a8ecdc;border-bottom-color:#2c7a66;font-size:15px;line-height:24px;gap:26px}
.units i{width:13px;height:7px;border:2px solid #a8ecdc;border-right-color:#2c7a66;border-bottom-color:#2c7a66}
.status{background:#afffff;border-top:3px solid #6f8f8f;border-bottom:3px solid #6aa;text-align:center;font:bold 12px/24px var(--mono)}

/* measure popup */
.popup{position:absolute;right:0;top:246px;width:179px;background:var(--mint);font:bold 15px var(--mono)}
.popup header{height:30px;background:#fff;display:flex;align-items:center;gap:5px;padding:0 9px 0 3px;font:13px var(--ui);color:#8d8d8d}
.popup h2{flex:1;font-size:13px}
.px{width:12px;height:12px}
.popup legend{float:left;width:100%;height:17px;border:1px solid #000;background:var(--aqua);text-align:center;line-height:15px}
.popup fieldset label{display:flex;clear:both;align-items:center;height:29px;background:var(--aqua);border:1px solid #000;border-left:0;border-bottom-width:2px;gap:5px;padding-left:4px;white-space:nowrap;overflow:hidden}
.popup input{appearance:none;width:11px;height:11px;transform:rotate(45deg);border:2px solid #c8f3f0;border-right-color:#4e7c7c;border-bottom-color:#4e7c7c;flex:none}
.popup input:checked{background:#c8104f;border-color:#4e7c7c #c8104f #c8104f #4e7c7c}
.close{margin-top:31px;border:1px solid #000;border-left:0;padding:2px 2px 2px 0}
.close button{display:block;width:100%;height:24px;background:var(--aqua);border:2px solid #c8f3f0;border-left:0;border-right-color:#4e7c7c;border-bottom-color:#4e7c7c}

/* spreadsheet window */
.excel{position:absolute;left:630px;right:179px;top:50px;background:#bfdbff;color:var(--navy);font-size:12px;box-shadow:0 0 6px #0006;overflow:hidden}
.xl-title{height:30px;background:#fff;display:flex;align-items:center;padding:0 9px 0 40px;color:#111}
.qat{width:104px;height:21px;border:1px solid #b5bfd1;border-left:0;border-radius:0 12px 12px 0;flex:none;overflow:hidden}
.qat svg{width:110px;height:20px}
.more{width:8px;height:10px;margin-left:6px}
.xl-title h2{flex:1;text-align:center;font-size:12px}
.orb{position:absolute;left:2px;top:7px;width:40px;height:40px}
.xl-tabs{display:flex;align-items:flex-end;height:27px;padding:0 4px 0 47px}
.xl-tabs a{padding:0 14px 0 15px;line-height:25px;height:25px}
.xl-tabs a.active{padding:0 12px 0 11px;background:#e5effc;border:1px solid #8db2e3;border-bottom:0;border-radius:3px 3px 0 0;margin-right:1px;line-height:24px}
.xl-tabs svg{width:90px;height:16px;margin:0 -9px 6px auto}
.ribbon{height:107px;border:1px solid #8db2e3;border-radius:4px;background:linear-gradient(#dbe7f6,#cadcf1 20%,#d3e3f6 80%,#dff);padding:1px 2px 3px;display:flex;gap:3px}
.rg{position:relative;display:grid;grid-template-columns:auto 1fr;grid-template-rows:1fr 19px;border:1px solid #9ebfe6;border-radius:3px;background:linear-gradient(#dce7f5,#c9daef 20%,#dce9f8);flex:none}
.rg h3{grid-column:1/-1;background:#c1d8f2;color:#3e6aaa;font-size:12px;line-height:18px;text-align:center;display:flex;justify-content:center;align-items:center}
.rg h3 s{position:absolute;right:5px;bottom:6px;width:7px;height:7px;border:1px solid #6a8cc0;border-right-width:2px;border-bottom-width:2px}
.clip{width:112px}.font{width:234px}.align{width:229px}.num{width:136px}.sty{width:165px}.cel{width:134px}.edt{width:176px}
.rg-body{display:flex;white-space:nowrap}
.rg em,.fbar em{font-size:9px;color:#567fb8}
.rg.sty .rg-body,.rg.cel .rg-body{grid-column:1/-1;justify-content:space-around;padding:0 2px}
.big{display:flex;flex-direction:column;align-items:center;padding:4px 0 0;line-height:16px;flex:none}
.big svg{width:30px;height:30px;margin-bottom:7px}
.big em{line-height:14px}
.clip .big{padding-left:8px}
.stack{display:flex;flex-direction:column;padding:2px 0 0 10px}
.stack button,.wrap button{display:flex;align-items:center;height:22px;gap:3px}
.stack svg{width:14px;height:14px}
.edt .rg-body{grid-column:1/-1;gap:5px}
.edt .stack{padding-left:6px;width:86px;flex:none}
.edt .stack button{gap:2px}
.edt .stack svg{width:16px;height:16px}
.rows{flex-direction:column;gap:11px;padding:12px 0 0 3px}
.row{display:flex;gap:4px;height:23px;align-items:center}
.bg{display:flex;align-items:center;height:21px;border:1px solid #92aed6;border-radius:3px;background:linear-gradient(#d5e3f5,#c3d5ee)}
.bg em{width:12px;text-align:center}
.bg button{display:flex;align-items:center;justify-content:center;width:22px;height:19px}
.bg button svg{width:18px;height:18px}
.bg .lit{background:linear-gradient(#fbd59a,#ffb347 50%,#ffe08a)}
.align .rows{gap:12px}
.wrap{border-left:1px solid #a9c2e3;margin:12px 0 8px 4px;padding:0 0 0 5px;display:flex;flex-direction:column;justify-content:space-between;white-space:nowrap}
.wrap svg{width:16px;height:16px}
.t{font:bold 15px "Liberation Serif",serif;color:#222}
.t.small{font-size:12px}.t.it{font-style:italic}.t.un{text-decoration:underline}
.t.pc{font-size:13px}
.bg button .tri{width:6px;height:4px;align-self:flex-start;margin-top:3px}
.bg .wen{flex-direction:column;line-height:10px;width:24px}
.wen small{font-size:8px;line-height:8px}
.dec{font:9px/9px "Liberation Sans",sans-serif;color:#111}
.combo{appearance:none;height:24px;border:1px solid #abc1de;color:#111;padding:0 3px;background:#eaf2fb linear-gradient(#567fb8,#567fb8) no-repeat right 6px center/5px 2px}
.face{width:131px}.size{width:47px;margin-left:-4px}.fmt{width:127px}

.fbar{display:flex;align-items:center;height:26px;background:#fff;border-top:5px solid #a9c5ec;border-bottom:3px solid #cfe0f5;color:#111}
.name{width:140px;text-align:center;font:16px "Liberation Serif",serif}
.fbar em{width:16px;text-align:center;color:#111}
.fx{width:80px;height:18px;background:linear-gradient(90deg,#dbe6f6,#b8d0f0);border-radius:9px 0 0 9px;border:1px solid #8fa9cf;text-align:right;padding-right:6px;font:bold 15px/15px "Liberation Serif",serif;color:#445}
.fx sub{font-size:10px;line-height:8px}
.formula{flex:1;min-width:0}
.fbar button{width:15px;height:18px;background:#cfe0f7;border:1px solid #8fa9cf}

.view{display:grid;grid-template-columns:1fr 16px;height:747px;border-bottom:1px solid #8faacf}
.sheet{position:relative;overflow:hidden;background:#fff;color:#000}
.grid{table-layout:fixed;width:100%;border-spacing:0}
.h{width:34px}.c{width:72px}.m{width:127px}
.grid th,.grid td{padding:0;border-bottom:1px solid #d0d7e5;overflow:hidden;white-space:nowrap}
.grid thead th{height:19px;background:linear-gradient(#f9fbfd,#dfe5ee);border-right:1px solid #9eb6ce;border-bottom-color:#9eb6ce;font:15px/17px "Liberation Serif",serif;color:#27413e}
.grid thead th.cur{background:linear-gradient(#f9d99f,#f1c15f);border-color:#f29536}
.grid thead .corner{background:linear-gradient(135deg,#a9c4e9 60%,#dfe9f7 60%)}
.grid thead .last{text-align:right;padding-right:12px}
.grid tbody tr{height:35px}
.grid tbody th{background:#e4ecf7;border-right:1px solid #9eb6ce;border-bottom-color:#9eb6ce;vertical-align:bottom;font:16px/17px "Liberation Serif",serif;color:#27413e}
.grid tbody th.cur{background:#bac4d2}
.grid td{font-family:"Noto Sans CJK SC",sans-serif;font-size:16px;line-height:20px;padding-left:2px}
.grid .v td{border-right:1px solid #d0d7e5}
.grid tbody .r37{height:30px}.grid tbody .r38{height:79px}.grid tbody .r39{height:34px}.grid tbody .r40{height:32px}.grid tbody .r41{height:31px}
.r38 td{vertical-align:bottom;padding-bottom:9px}
.pair{display:grid;grid-template-columns:616px 1fr}
.grid td.blue{color:#0000a8}
.redtx{color:#c80000}
.cut{margin-left:-16px}
.half{margin-left:-8px}
.q{display:inline-block;width:16px}
kbd{font:13px var(--mono)}

/* floating objects on the sheet */
.doc{position:absolute;left:34px;top:88px;width:1164px;padding:3px 2px 2px 0;background:#fff;font:13px/17px var(--song)}
.doc-frame{display:grid;grid-template-columns:610px 1fr;border:solid #000;border-width:1px 1px 1px 0;height:445px}
.doc p{height:17px;white-space:nowrap;overflow:hidden}
.dl{border-right:1px solid #000}
.dr{padding-left:3px}
.dl .in{text-indent:-8px}
.doc del{color:#e00000}
.doc b{font-style:italic;font-weight:bold}
.spec{position:absolute;left:664px;top:346px;background:#fff;border-left:1px solid #9ab8e0;padding-bottom:3px;font:14px "Noto Sans","Noto Sans CJK SC",sans-serif}
.spec table{table-layout:fixed;width:576px;border-collapse:collapse}
.s1{width:93px}.s2{width:140px}.s3{width:211px}.s4{width:132px}
.spec td{height:27px;padding:0;border:1px solid #000;text-align:center;white-space:nowrap;line-height:20px}
.spec td:first-child[rowspan]{border-left:0}
.spec .pth{font-family:"Liberation Serif",serif}
.spec td.over{color:#c80000;font-size:15px;text-align:left;padding-left:3px}
.mark{position:absolute;left:225px;top:-3px;width:233px;height:56px;border:5px solid #ff0;box-shadow:3px 3px 4px #0009,inset 3px 3px 4px #0006}

.vscroll{background:#7897c6;display:flex;flex-direction:column;align-items:center}
.vscroll .split{width:14px;height:8px;border:1px solid #46a;background:#fff;margin-bottom:10px}
.vscroll svg,.hscroll svg{width:10px;height:10px;fill:#33507f;flex:none}
.vscroll b{width:14px;height:132px;margin-top:73px;background:repeating-linear-gradient(#678 0 1px,#fff0 1px 3px) center/6px 9px no-repeat,linear-gradient(90deg,#f4f8fd,#cfdcf0);border:1px solid #6886b5}
.vscroll .dn{margin:auto 0 4px}
.stabs{display:flex;height:16px;background:#c5d9f3;border-bottom:1px solid #6f8fc0;overflow:hidden}
.nav{width:64px;height:14px;flex:none}
.slist{flex:1;display:flex;overflow:hidden;font:14px/15px "Liberation Serif","Noto Sans CJK SC",serif}
.slist a{position:relative;flex:none;padding:0 8px;white-space:nowrap;border-bottom:1px solid #7b97c4}
.slist a::after{content:"";position:absolute;right:0;top:0;width:1px;height:16px;background:#7b97c4;transform:rotate(30deg)}
.slist .active{background:#fff;border-bottom-color:#fff}
.hscroll{width:128px;background:#7897c6;display:flex;align-items:center;justify-content:space-between;flex:none;margin-right:16px}
.hscroll i{width:5px;height:13px;background:#fff;border:1px solid #46a}
.hscroll b{width:49px;height:13px;border:1px solid #6886b5;background:repeating-linear-gradient(90deg,#678 0 1px,#fff0 1px 2px) center/7px 6px no-repeat,linear-gradient(#f4f8fd,#cfdcf0)}
.xl-status{display:flex;align-items:center;height:22px;background:linear-gradient(#dceafb,#b5cff2 45%,#a5c3ee 50%,#cfe1fa);border-bottom:1px solid #fff}
.ready{padding:0 8px 0 7px;border-right:1px solid #8fa9cf}
.views{width:57px;height:17px;margin-left:auto}
.pct{padding:0 8px;color:#1c3560}
.zoombar{width:156px;height:20px}
.xl-status .views,.xl-status .pct,.xl-status .zoombar{flex:none}

.activate{position:absolute;left:1752px;top:1012px;display:flex;flex-direction:column;color:#a0a0a0b8;white-space:nowrap}
.activate b{font-weight:400;font-size:20px;line-height:26px}
.activate span{font-size:15px;line-height:22px}
.ime{position:absolute;left:1594px;top:1083px;width:164px;height:28px}
.ime svg{width:164px;height:28px}
.ime span{position:absolute;left:33px;top:4px;font:bold 15px/22px "Noto Sans CJK SC",sans-serif;color:#334058}
```
